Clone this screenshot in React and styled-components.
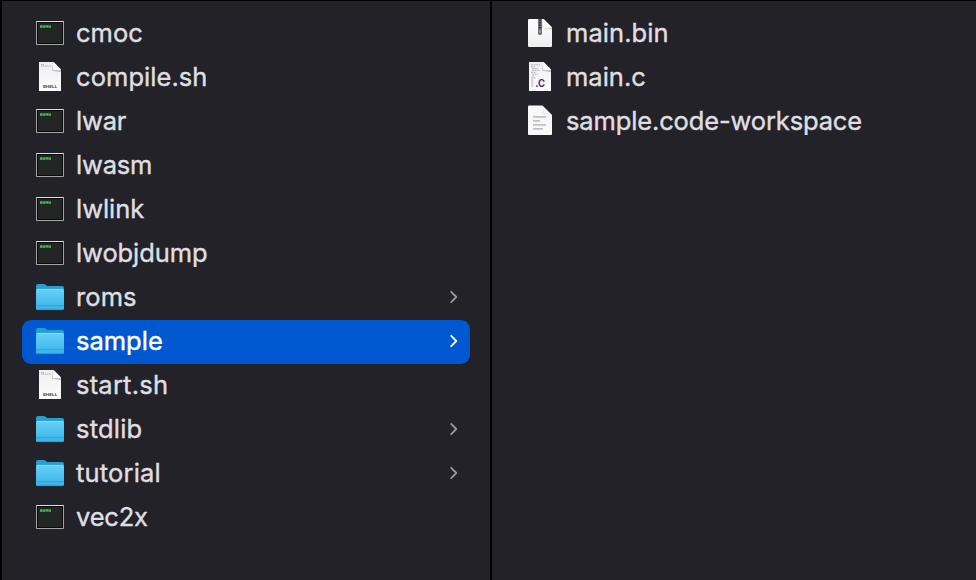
import React from "react";
import styled, { createGlobalStyle } from "styled-components";

const GlobalStyle = createGlobalStyle`
  * { box-sizing: border-box; }
  body { margin: 0; background: #000; overflow: hidden; }
`;

const Browser = styled.main`
  display: grid;
  grid-template-columns: 488px 1fr;
  gap: 2px;
  width: 976px;
  height: 580px;
  padding: 1px 0 0 2px;
  background: #000;
  font-family: Inter, "Liberation Sans", sans-serif;
`;

const Column = styled.ul`
  display: flex;
  flex-direction: column;
  margin: 0;
  padding: 11px 20px 0;
  list-style: none;
  background: #232229;
`;

const Row = styled.li`
  display: flex;
  align-items: center;
  height: 44px;
  padding: 0 11px 0 14px;
  border-radius: 9px;
  color: ${(p) => (p.$selected ? "#fff" : "#dfdee0")};
  background: ${(p) => (p.$selected ? "#0058d0" : "transparent")};
`;

const IconSlot = styled.span`
  display: flex;
  width: 28px;
  height: 44px;
  margin-right: 12px;
`;

const Label = styled.span`
  flex: 1;
  padding-bottom: 2px;
  font-size: 25.5px;
  line-height: 42px;
  font-weight: 400;
  -webkit-text-stroke: 0.4px currentColor;
  letter-spacing: ${(p) => p.$tracking}px;
  white-space: nowrap;
`;

const Svg = styled.svg`
  display: block;
  overflow: visible;
`;

function Terminal() {
  return (
    <Svg width="28" height="44" viewBox="0 0 28 44">
      <rect x="0" y="9" width="28" height="24" rx="0.8" fill="#a5a5a6" />
      <rect x="0.5" y="9" width="27" height="1" fill="#e0e0e0" />
      <rect x="1" y="10" width="26" height="22" fill="#080a09" />
      <rect x="2" y="11" width="24" height="20" fill="#232624" />
      <path d="M4 14.5H15" stroke="#247a38" strokeWidth="3" />
      <path d="M4 14.5H15" stroke="#3db558" strokeWidth="2" strokeDasharray="2.2 .7" />
      <path d="M7 13.2H7.8M10 15.8H10.6M13 13.2H13.6" stroke="#232624" strokeWidth="1" />
    </Svg>
  );
}

function Page({ id }) {
  return (
    <>
      <defs>
        <linearGradient id={id} x1="0" y1="0" x2="0" y2="1">
          <stop offset="0" stopColor="#eeeeef" />
          <stop offset="1" stopColor="#fdfdfd" />
        </linearGradient>
      </defs>
      <path d="M3 6H17.5L25 13.5V35H3Z" fill={`url(#${id})`} />
      <path d="M16.8 7V14.3H25V16L16 14.8Z" fill="#96969e" opacity=".65" />
      <path d="M17.5 6L25 13.5H17.5Z" fill="#fff" />
    </>
  );
}

function Shell() {
  return (
    <Svg width="28" height="44" viewBox="0 0 28 44">
      <Page id="shellPage" />
      <path d="M5 8.5H8M5 10H15" stroke="#a5a5aa" strokeWidth=".9" strokeDasharray="1.5 .5" />
      <text x="6.7" y="32.3" textLength="14.6" lengthAdjust="spacingAndGlyphs" fontSize="4" fontWeight="700" fill="#4a4a4e">SHELL</text>
    </Svg>
  );
}

function Folder() {
  return (
    <Svg width="28" height="44" viewBox="0 0 28 44">
      <defs>
        <linearGradient id="folderFront" x1="0" y1="0" x2="0" y2="1">
          <stop offset="0" stopColor="#68d0f8" />
          <stop offset="1" stopColor="#36b3e7" />
        </linearGradient>
      </defs>
      <path d="M0 10Q0 8 2 8H7.5Q9 8 10 9L11 10H26Q28 10 28 12V20H0Z" fill="#239fd0" />
      <path d="M0 14.5Q0 13 1.5 13H26.5Q28 13 28 14.5V32.5Q28 34 26.5 34H1.5Q0 34 0 32.5Z" fill="url(#folderFront)" />
      <path d="M1 13.4H27" stroke="#8adefa" strokeWidth=".8" />
      <path d="M0 29.7H28" stroke="#239fd0" strokeWidth=".8" />
      <path d="M1 33.7H27" stroke="#238fb9" strokeWidth=".7" />
    </Svg>
  );
}

function Binary() {
  return (
    <Svg width="28" height="44" viewBox="0 0 28 44">
      <defs>
        <linearGradient id="binaryPage" x1="0" y1="0" x2="0" y2="1">
          <stop offset="0" stopColor="#fff" />
          <stop offset="1" stopColor="#eeeeef" />
        </linearGradient>
      </defs>
      <path d="M3.2 7H17.5L26 15.5V33.8Q26 35 24.8 35H3.2Q2 35 2 33.8V8.2Q2 7 3.2 7Z" fill="url(#binaryPage)" />
      <path d="M17 8V16H26V17L16.5 16Z" fill="#8f8f96" opacity=".6" />
      <path d="M17.8 7.2L25.8 15.2H17.8Z" fill="#fff" />
      <path d="M12 7H16V21.5Q16 23 14 23Q12 23 12 21.5Z" fill="#717175" />
      <path d="M14 7.5V17" stroke="#343438" strokeWidth="1.7" strokeDasharray="1.5 1" />
      <path d="M14 18V21" stroke="#a9a9ac" strokeWidth="1.2" />
    </Svg>
  );
}

function CSource() {
  return (
    <Svg width="28" height="44" viewBox="0 0 28 44">
      <Page id="sourcePage" />
      <path d="M5 8.8H14M5 10.7H9M6 12.5H12M6 14.4H14M5 16.3H10M6 18.2H12M6 20.1H9M5 22H10M5 24H8M5 26H8M5 28H8M5 30H8" stroke="#b0b0b4" strokeWidth=".9" strokeDasharray="2 .6" />
      <text x="9.3" y="31.3" textLength="9.7" lengthAdjust="spacingAndGlyphs" fontSize="10" fontWeight="700" fill="#4c2789">.C</text>
    </Svg>
  );
}

function Document() {
  return (
    <Svg width="28" height="44" viewBox="0 0 28 44">
      <path d="M3 5.5H16.5L26 15V34Q26 35 25 35H3Q2 35 2 34V6.5Q2 5.5 3 5.5Z" fill="#f8f8f9" />
      <path d="M16.2 6.2Q18 9 17.7 13.2Q23 13 25.5 15" fill="#fff" stroke="#d7d7dc" strokeWidth=".5" />
      <path d="M7 16.9H20M7 20.9H14M7 24.9H20M7 28.9H17" stroke="#c0c0c3" strokeWidth="1.6" />
    </Svg>
  );
}

const Arrow = styled.svg`
  width: 10px;
  height: 16px;
  margin-bottom: 2px;
  fill: none;
  stroke: ${(p) => (p.$selected ? "#fff" : "#99989d")};
  stroke-width: 1.8;
  stroke-linecap: round;
  stroke-linejoin: round;
`;

const icons = {
  terminal: Terminal,
  shell: Shell,
  folder: Folder,
  binary: Binary,
  source: CSource,
  document: Document,
};

const files = [
  { name: "cmoc", kind: "terminal" },
  { name: "compile.sh", kind: "shell", tracking: 0.06 },
  { name: "lwar", kind: "terminal", tracking: -0.2 },
  { name: "lwasm", kind: "terminal", tracking: -0.2 },
  { name: "lwlink", kind: "terminal", tracking: -0.05 },
  { name: "lwobjdump", kind: "terminal", tracking: -0.1 },
  { name: "roms", kind: "folder", tracking: 0.1 },
  { name: "sample", kind: "folder", selected: true },
  { name: "start.sh", kind: "shell", tracking: 0.22 },
  { name: "stdlib", kind: "folder", tracking: 0.2 },
  { name: "tutorial", kind: "folder", tracking: 0.17 },
  { name: "vec2x", kind: "terminal", tracking: -0.2 },
];

const children = [
  { name: "main.bin", kind: "binary", tracking: 0.07 },
  { name: "main.c", kind: "source" },
  { name: "sample.code-workspace", kind: "document", tracking: -0.14 },
];

function FileRow({ name, kind, selected, tracking = 0 }) {
  const Icon = icons[kind];
  return (
    <Row $selected={selected}>
      <IconSlot><Icon /></IconSlot>
      <Label $tracking={tracking}>{name}</Label>
      {kind === "folder" && (
        <Arrow viewBox="0 0 10 16" $selected={selected}>
          <path d="M2.2 2.8L7.3 8L2.2 13.2" />
        </Arrow>
      )}
    </Row>
  );
}

export default function App() {
  return (
    <>
      <GlobalStyle />
      <Browser>
        <Column>{files.map((file) => <FileRow key={file.name} {...file} />)}</Column>
        <Column>{children.map((file) => <FileRow key={file.name} {...file} />)}</Column>
      </Browser>
    </>
  );
}
